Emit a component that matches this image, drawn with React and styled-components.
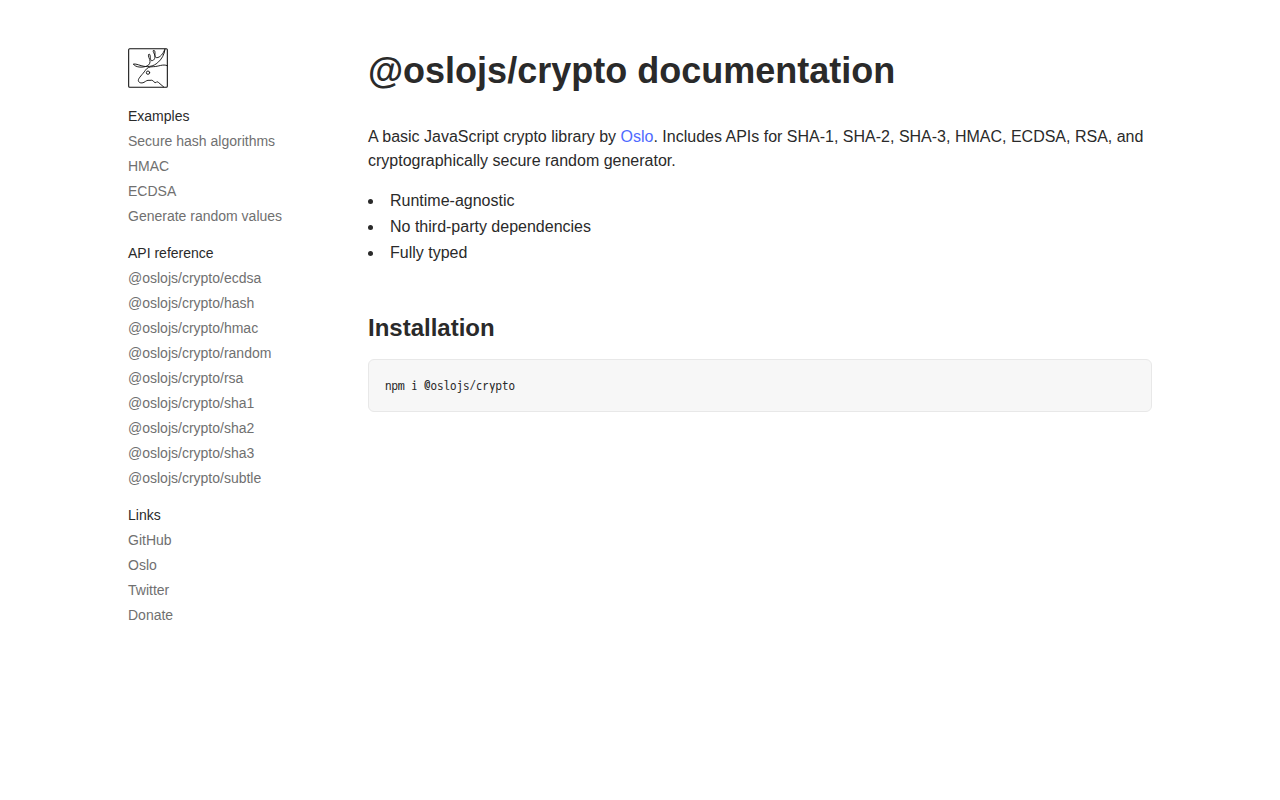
import React from "react";
import styled, { createGlobalStyle } from "styled-components";

const GlobalStyle = createGlobalStyle`
  *,
  *::before,
  *::after {
    box-sizing: border-box;
  }

  body {
    margin: 0;
    background: #fff;
    color: #2a2a2a;
    font-family: "Liberation Sans", Arial, sans-serif;
    font-size: 16px;
    line-height: 24px;
  }
`;

const PageStyle = styled.div`
  display: flex;
  padding: 48px 10%;
`;

const SidebarStyle = styled.aside`
  flex: 0 0 240px;
  font-size: 14px;
  line-height: 20px;
`;

const HomeLinkStyle = styled.a`
  display: block;
  width: 40px;
  height: 40px;
  color: #111;
`;

const NavStyle = styled.nav`
  display: flex;
  flex-direction: column;
  gap: 17px;
  margin-top: 18px;
`;

const NavTitleStyle = styled.h2`
  margin: 0;
  font-size: 14px;
  font-weight: 400;
`;

const NavListStyle = styled.ul`
  display: flex;
  flex-direction: column;
  gap: 5px;
  margin: 5px 0 0;
  padding: 0;
  list-style: none;
`;

const NavLinkStyle = styled.a`
  display: block;
  color: #707070;
  text-decoration: none;

  &:hover {
    color: #2a2a2a;
  }
`;

const MainStyle = styled.main`
  flex: 1;
  min-width: 0;
`;

const TitleStyle = styled.h1`
  margin: 0;
  font-size: 36px;
  line-height: 45px;
`;

const ParagraphStyle = styled.p`
  margin: 32px 0 16px;
`;

const TextLinkStyle = styled.a`
  color: #4f6bff;
  text-decoration: none;

  &:hover {
    text-decoration: underline;
  }
`;

const ListStyle = styled.ul`
  display: flex;
  flex-direction: column;
  gap: 2px;
  margin: 0;
  padding: 0;
  list-style: disc inside;
`;

const HeadingStyle = styled.h2`
  margin: 48px 0 16px;
  font-size: 24px;
  line-height: 30px;
`;

const CodeBlockStyle = styled.pre`
  margin: 0;
  padding: 16px;
  overflow-x: auto;
  border: 1px solid #e8e8e8;
  border-radius: 6px;
  background: #f7f7f7;
  font-family: "WenQuanYi Zen Hei Mono", "Noto Sans Mono CJK SC", monospace;
  font-size: 13px;
  line-height: 19px;

  code {
    font-family: inherit;
  }
`;

const sections = [
  {
    title: "Examples",
    links: ["Secure hash algorithms", "HMAC", "ECDSA", "Generate random values"],
  },
  {
    title: "API reference",
    links: ["ecdsa", "hash", "hmac", "random", "rsa", "sha1", "sha2", "sha3", "subtle"].map(
      (name) => `@oslojs/crypto/${name}`
    ),
  },
  {
    title: "Links",
    links: ["GitHub", "Oslo", "Twitter", "Donate"],
  },
];

const Logo = () => {
  return (
    <svg
      width="40"
      height="40"
      viewBox="0 0 120 120"
      fill="none"
      stroke="currentColor"
      strokeLinecap="round"
      strokeLinejoin="round"
      aria-hidden="true"
    >
      <rect x="2" y="2" width="116" height="116" rx="3" strokeWidth="3.2" />
      <g strokeWidth="2.8">
        <path d="M111 4C109 20 101 34 89 44C77 55 62 57 48 55C36 53 26 47 16 48C22 58 42 60 57 54C65 51 68 42 65 34C61 26 60 19 63 18C69 18 65 38 71 38C80 38 83 27 79 18C75 10 74 7 78 7C85 9 76 28 86 29C96 29 106 17 110 5" />
        <path d="M118 53C104 47 92 56 76 56C65 56 57 59 52 67C44 79 31 90 31 97C31 104 40 107 48 103C55 99 56 96 66 97C75 95 75 100 81 104C86 105 84 98 91 103C97 107 101 113 107 117" />
        <circle cx="60" cy="74" r="5" />
      </g>
    </svg>
  );
};

const NavSection = ({ title, links }) => {
  return (
    <section>
      <NavTitleStyle>{title}</NavTitleStyle>
      <NavListStyle>
        {links.map((link) => (
          <li key={link}>
            <NavLinkStyle href="#">{link}</NavLinkStyle>
          </li>
        ))}
      </NavListStyle>
    </section>
  );
};

const App = () => {
  return (
    <>
      <GlobalStyle />
      <PageStyle>
        <SidebarStyle>
          <HomeLinkStyle href="#" aria-label="Home">
            <Logo />
          </HomeLinkStyle>
          <NavStyle>
            {sections.map((section) => (
              <NavSection key={section.title} {...section} />
            ))}
          </NavStyle>
        </SidebarStyle>
        <MainStyle>
          <TitleStyle>@oslojs/crypto documentation</TitleStyle>
          <ParagraphStyle>
            A basic JavaScript crypto library by <TextLinkStyle href="#">Oslo</TextLinkStyle>.
            Includes APIs for SHA-1, SHA-2, SHA-3, HMAC, ECDSA, RSA, and cryptographically secure
            random generator.
          </ParagraphStyle>
          <ListStyle>
            <li>Runtime-agnostic</li>
            <li>No third-party dependencies</li>
            <li>Fully typed</li>
          </ListStyle>
          <HeadingStyle>Installation</HeadingStyle>
          <CodeBlockStyle>
            <code>npm i @oslojs/crypto</code>
          </CodeBlockStyle>
        </MainStyle>
      </PageStyle>
    </>
  );
};

export default App;
